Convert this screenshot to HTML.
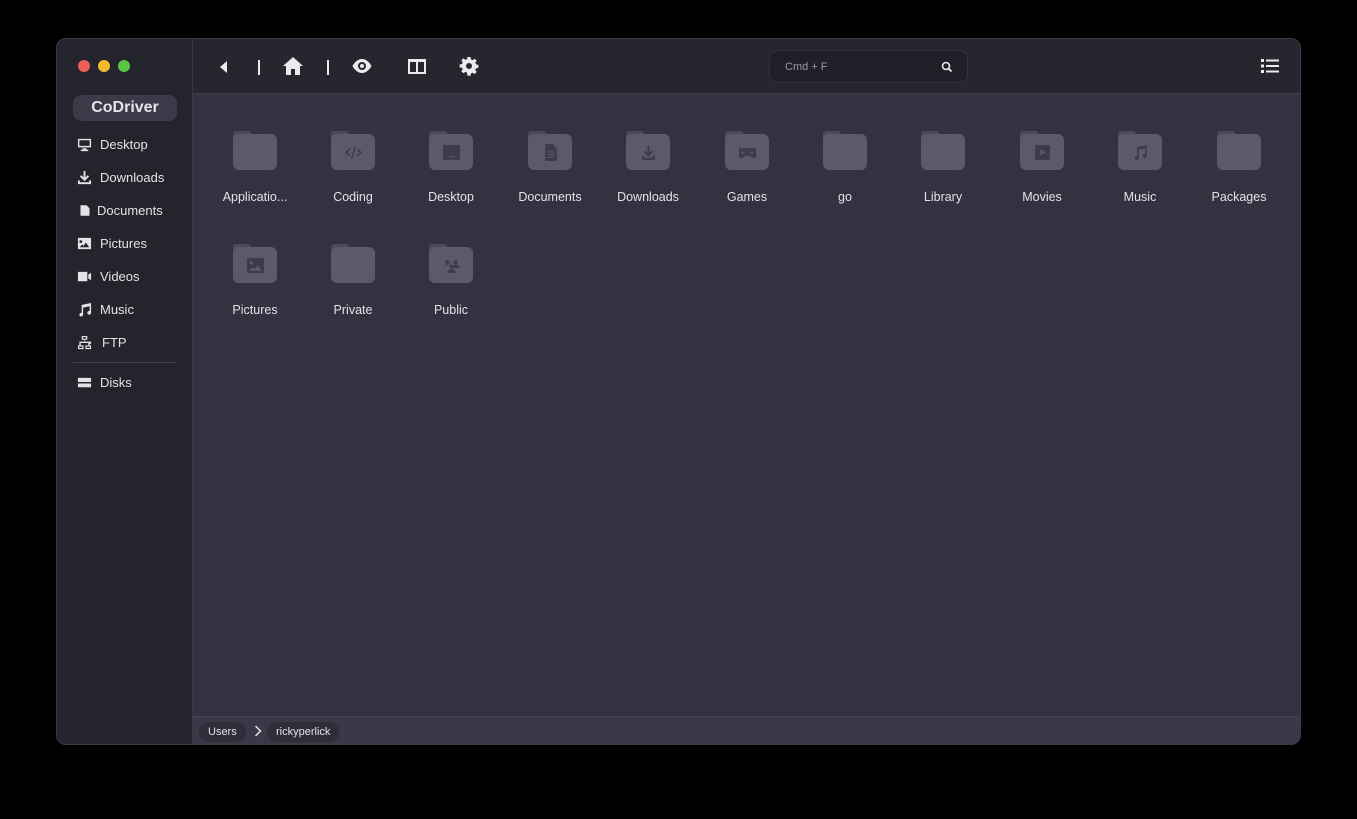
<!DOCTYPE html>
<html><head><meta charset="utf-8"><style>
*{margin:0;padding:0;box-sizing:border-box}
body{width:1357px;height:819px;background:#000;font-family:"Liberation Sans",sans-serif;position:relative;overflow:hidden}
.win{position:absolute;left:56px;top:38px;width:1245px;height:707px;border-radius:10px;overflow:hidden;background:#323240;border:1px solid #3a3a46}
.side{position:absolute;left:0;top:0;width:136px;height:100%;background:#24242d;border-right:1px solid #3a3a46}
.dot{position:absolute;top:21px;width:12px;height:12px;border-radius:50%}
.brand{position:absolute;left:16px;top:56px;width:104px;height:26px;border-radius:8px;background:#3a3a48;color:#e4e4ea;font-weight:bold;font-size:16px;text-align:center;line-height:26px}
.it{position:absolute;left:20px;color:#e2e2e8;font-size:13px;display:flex;align-items:center;gap:8px;height:16px}
.it svg{width:15px;height:15px;fill:#e2e2e8}
.tb{position:absolute;left:136px;top:0;right:0;height:55px;background:#26262f;border-bottom:1px solid #3f3f4c}
.tb svg{position:absolute;fill:#eaeaf0}
.sep{position:absolute;top:21px;width:2px;height:15px;background:#eaeaf0}
.search{position:absolute;left:576px;top:11px;width:199px;height:33px;border-radius:9px;background:#1f1f27;border:1px solid #34343f;color:#9a9aa4;font-size:11px;line-height:33px;padding-left:15px}
.f{position:absolute;width:98px;text-align:center}
.f .ic{position:relative;width:44px;height:40px;margin:0 auto}
.f .tab{position:absolute;left:0;top:0;width:18px;height:8px;background:#4b4b5c;border-radius:3px 3px 0 0}
.f .bd{position:absolute;left:0;top:3px;width:44px;height:36px;background:#5a5a6b;border-radius:6px;display:flex;align-items:center;justify-content:center}
.f .bd svg{width:19px;height:19px;fill:#3b3b49}
.f .lb{margin-top:19px;color:#e2e2e8;font-size:12.5px}
.foot{position:absolute;left:136px;bottom:0;right:0;height:28px;background:#393947;border-top:1px solid #44444f}
.crumb{position:absolute;top:5px;height:20px;border-radius:10px;background:#2e2e3a;color:#e2e2e8;font-size:11px;line-height:20px;padding:0 9px}
</style></head><body>
<div class="win">
<div class="side">
<div class="dot" style="left:21px;background:#ec5f57"></div>
<div class="dot" style="left:41px;background:#f3bc2f"></div>
<div class="dot" style="left:61px;background:#5bc63f"></div>
<div class="brand">CoDriver</div>
<div class="it" style="top:97px"><svg viewBox="0 0 16 16"><path d="M1 2h14v9H1zM2.5 3.5v6h11v-6zM6 12h4v1.5h2V15H4v-1.5h2z"/></svg>Desktop</div>
<div class="it" style="top:130px"><svg viewBox="0 0 16 16"><path d="M7 1h2v7l2.5-2.5 1.4 1.4L8 11.8 3.1 6.9l1.4-1.4L7 8zM1 11h2v2h10v-2h2v4H1z"/></svg>Downloads</div>
<div class="it" style="top:163px;left:22px;gap:6px"><svg viewBox="0 0 16 16" style="width:12px"><path d="M2 1h8l4 4v10H2z"/></svg>Documents</div>
<div class="it" style="top:196px"><svg viewBox="0 0 16 16"><path d="M1 2h14v12H1zM4 4.5a1.5 1.5 0 1 0 .01 0zM3 12h10l-3.5-5-2.5 3.5-1.5-1.5z"/></svg>Pictures</div>
<div class="it" style="top:229px"><svg viewBox="0 0 16 16"><path d="M1 3h10v10H1zM12 6l3-2v8l-3-2z"/></svg>Videos</div>
<div class="it" style="top:262px"><svg viewBox="0 0 16 16"><path d="M5 3l10-2v10.5a2 2 0 1 1-1.5-1.9V4.5L6.5 6v7.5A2 2 0 1 1 5 11.6z"/></svg>Music</div>
<div class="it" style="top:295px;gap:10px"><svg viewBox="0 0 16 16"><path d="M5 1h6v4H8.7v2H15v2.5h-1.5V11H15v4H9v-4h3V8.5H4V11h3v4H1v-4h1.5V8.5h0V7h5.5V5H5zM6.3 2.2v1.6h3.4V2.2zM2.3 12.2v1.6h3.4v-1.6zM10.3 12.2v1.6h3.4v-1.6z"/></svg>FTP</div>
<div style="position:absolute;left:16px;top:323px;width:104px;height:1px;background:#44444f"></div>
<div class="it" style="top:335px"><svg viewBox="0 0 16 16"><path d="M1 3h14v4.5H1zM1 9h14v4H1zM11 10.3h1.5v1.4H11zM13 10.3h1v1.4h-1z"/></svg>Disks</div>
</div>
<div class="tb">
<svg style="left:26px;top:21px" width="10" height="14" viewBox="0 0 10 14"><path d="M8 1v12L1 7z"/></svg>
<div class="sep" style="left:65px"></div>
<svg style="left:89px;top:17px" width="22" height="20" viewBox="0 0 22 20"><path d="M11 1l10 9h-3v9h-5v-6H9v6H4v-9H1z"/></svg>
<div class="sep" style="left:134px"></div>
<svg style="left:158px;top:19px" width="22" height="16" viewBox="0 0 22 16"><path d="M11 1C5 1 1.5 8 1.5 8S5 15 11 15s9.5-7 9.5-7S17 1 11 1zm0 11a4 4 0 1 1 0-8 4 4 0 0 1 0 8z"/><circle cx="11" cy="8" r="2"/></svg>
<svg style="left:214px;top:19px" width="20" height="17" viewBox="0 0 20 17"><path d="M1 1h18v15H1zM3 4v10h6V4zm8 0v10h6V4z"/></svg>
<svg style="left:266px;top:17px" width="20" height="20" viewBox="0 0 20 20"><path d="M8.5 1h3l.5 2.4 1.6.7 2-1.4 2.1 2.1-1.4 2 .7 1.6 2.4.5v3l-2.4.5-.7 1.6 1.4 2-2.1 2.1-2-1.4-1.6.7-.5 2.4h-3L8 16.6l-1.6-.7-2 1.4-2.1-2.1 1.4-2-.7-1.6L.6 11.5v-3L3 8l.7-1.6-1.4-2 2.1-2.1 2 1.4L8 3.4zM10 7a3 3 0 1 0 0 6 3 3 0 0 0 0-6z"/></svg>
<div class="search">Cmd + F<svg style="left:171px;top:10px" width="12" height="12" viewBox="0 0 12 12"><circle cx="5" cy="5" r="3.5" fill="none" stroke="#eaeaf0" stroke-width="1.6"/><path d="M7.5 7.5l3 3" stroke="#eaeaf0" stroke-width="1.8"/></svg></div>
<svg style="left:1068px;top:19px" width="18" height="16" viewBox="0 0 18 16"><path d="M0 1h3v3H0zM5 1.5h13v2H5zM0 6.5h3v3H0zM5 7h13v2H5zM0 12h3v3H0zM5 12.5h13v2H5z"/></svg>
</div>

<div class="f" style="left:149px;top:92px"><div class="ic"><div class="tab"></div><div class="bd"></div></div><div class="lb">Applicatio...</div></div>
<div class="f" style="left:247px;top:92px"><div class="ic"><div class="tab"></div><div class="bd"><svg viewBox="0 0 18 18"><path d="M5 5L1 9l4 4 1-1-3-3 3-3zM13 5l4 4-4 4-1-1 3-3-3-3zM10 3h1.4L8 15H6.6z"/></svg></div></div><div class="lb">Coding</div></div>
<div class="f" style="left:345px;top:92px"><div class="ic"><div class="tab"></div><div class="bd"><svg viewBox="0 0 18 18"><path d="M1 2h16v14H1zM6 12.5v1h6v-1z" fill-rule="evenodd"/></svg></div></div><div class="lb">Desktop</div></div>
<div class="f" style="left:444px;top:92px"><div class="ic"><div class="tab"></div><div class="bd"><svg viewBox="0 0 18 18"><path d="M4 1h7l4 4v12H4zM6 8h7v1H6zm0 2.5h7v1H6zm0 2.5h7v1H6z" fill-rule="evenodd"/></svg></div></div><div class="lb">Documents</div></div>
<div class="f" style="left:542px;top:92px"><div class="ic"><div class="tab"></div><div class="bd"><svg viewBox="0 0 18 18"><path d="M8 3h2v6.5l2.3-2.3 1.2 1.2L9 12.9 4.5 8.4l1.2-1.2L8 9.5zM3 12h2v2h8v-2h2v4H3z"/></svg></div></div><div class="lb">Downloads</div></div>
<div class="f" style="left:641px;top:92px"><div class="ic"><div class="tab"></div><div class="bd"><svg viewBox="0 0 18 18"><path d="M1 5h16v9h-4l-1.5-2h-5L5 14H1zM4 8v1H3v1h1v1h1v-1h1V9H5V8zm9 0a1.2 1.2 0 1 0 .01 0z" fill-rule="evenodd"/></svg></div></div><div class="lb">Games</div></div>
<div class="f" style="left:739px;top:92px"><div class="ic"><div class="tab"></div><div class="bd"></div></div><div class="lb">go</div></div>
<div class="f" style="left:837px;top:92px"><div class="ic"><div class="tab"></div><div class="bd"></div></div><div class="lb">Library</div></div>
<div class="f" style="left:936px;top:92px"><div class="ic"><div class="tab"></div><div class="bd"><svg viewBox="0 0 18 18"><path d="M2 2h14v14H2zM7 6v6l5-3z" fill-rule="evenodd"/></svg></div></div><div class="lb">Movies</div></div>
<div class="f" style="left:1034px;top:92px"><div class="ic"><div class="tab"></div><div class="bd"><svg viewBox="0 0 18 18"><path d="M6 4l9-2v10a2 2 0 1 1-1.5-1.9V5L7.5 6.3V14A2 2 0 1 1 6 12.1z"/></svg></div></div><div class="lb">Music</div></div>
<div class="f" style="left:1133px;top:92px"><div class="ic"><div class="tab"></div><div class="bd"></div></div><div class="lb">Packages</div></div>

<div class="f" style="left:149px;top:205px"><div class="ic"><div class="tab"></div><div class="bd"><svg viewBox="0 0 18 18"><path d="M1 2h16v14H1zM3 14h12l-4-5-3 3.5-2-2zM5 5a1.5 1.5 0 1 0 .01 0z" fill-rule="evenodd"/></svg></div></div><div class="lb">Pictures</div></div>
<div class="f" style="left:247px;top:205px"><div class="ic"><div class="tab"></div><div class="bd"></div></div><div class="lb">Private</div></div>
<div class="f" style="left:345px;top:205px"><div class="ic"><div class="tab"></div><div class="bd"><svg viewBox="0 0 18 18"><circle cx="5" cy="6" r="2"/><circle cx="13" cy="6" r="2"/><circle cx="9" cy="10" r="2"/><path d="M1 11.5c0-2 2-3 4-3s3 .6 3 .6H1zM10 9.1s1-.6 3-.6 4 1 4 3h-7zM5 16c0-2.5 2-3.5 4-3.5s4 1 4 3.5z"/></svg></div></div><div class="lb">Public</div></div>

<div class="foot">
<div class="crumb" style="left:6px">Users</div>
<svg style="position:absolute;left:61px;top:8px" width="8" height="12" viewBox="0 0 8 12"><path d="M1.5 1l5 5-5 5" fill="none" stroke="#e2e2e8" stroke-width="1.5"/></svg>
<div class="crumb" style="left:74px">rickyperlick</div>
</div>
</div>
</body></html>
